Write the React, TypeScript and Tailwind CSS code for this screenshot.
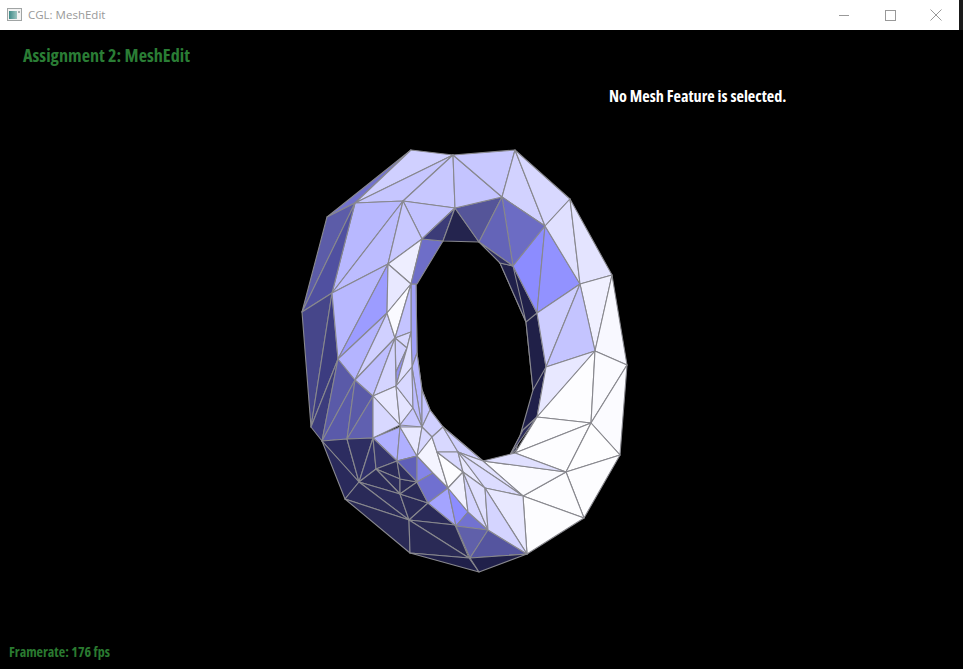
const faces: [string, string][] = [
    // back of the hole
    ["#bcbcff", "411,285 416,284 417,353 422,390 430,410 443,427 483,461 485,488 400,427"],
    ["#a0a0f8", "411,284 416,284 417,353 412,367 411,332"],
    ["#b8b8ff", "412,367 417,353 422,390 422,427"],
    ["#c4c4ff", "422,390 430,410 422,427"],
    ["#d0d0ff", "430,410 443,427 432,437 422,427"],
    ["#20204a", "500,263 513,266 537,313 546,367 537,417 523,430 510,455 516,450 533,390 526,322"],
    ["#202048", "526,322 537,313 546,367 533,390"],
    ["#20204a", "500,263 513,266 526,322"],
    ["#2a2a58", "523,430 537,417 510,455"],

    // top of the ring
    ["#7272cc", "411,150 327,217 355,203"],
    ["#d0d0ff", "411,150 453,155 355,203"],
    ["#c6c6ff", "355,203 453,155 403,201"],
    ["#c8c8ff", "453,155 455,208 403,201"],
    ["#c2c2ff", "403,201 455,208 422,239"],
    ["#b8b8ff", "355,203 403,201 332,293"],
    ["#bcbcff", "403,201 388,264 332,293"],
    ["#c8c8ff", "403,201 422,239 388,264"],
    ["#eeeeff", "388,264 422,239 411,284"],
    ["#6e6ec8", "422,239 443,241 417,284 411,284"],
    ["#3c3c78", "422,239 455,208 443,241"],
    ["#24244e", "455,208 479,242 443,241"],
    ["#555599", "455,208 502,197 479,242"],
    ["#c4c4ff", "453,155 502,197 455,208"],
    ["#c8c8ff", "453,155 515,150 502,197"],
    ["#d2d2ff", "502,197 515,150 545,226"],
    ["#d8d8ff", "515,150 570,199 545,226"],
    ["#6c6cc4", "502,197 545,226 513,266"],
    ["#6464b8", "502,197 513,266 479,242"],
    ["#2e2e60", "479,242 513,266 500,263"],
    ["#8c8cff", "513,266 545,226 537,313"],
    ["#9292ff", "545,226 580,284 537,313"],
    ["#e0e0ff", "570,199 580,284 545,226"],
    ["#e4e4ff", "570,199 612,275 580,284"],

    // right side
    ["#f0f0ff", "612,275 595,351 580,284"],
    ["#f8f8ff", "612,275 627,365 595,351"],
    ["#cdcdff", "537,313 580,284 546,367"],
    ["#c4c4ff", "580,284 595,351 546,367"],
    ["#e8e8ff", "546,367 595,351 537,417"],
    ["#fdfdff", "595,351 591,423 537,417"],
    ["#fbfbff", "595,351 627,365 591,423"],
    ["#fbfbff", "627,365 620,455 591,423"],
    ["#fdfdff", "537,417 591,423 515,453"],
    ["#fdfdff", "515,453 591,423 566,472"],
    ["#fefeff", "591,423 620,455 566,472"],
    ["#fdfdff", "566,472 620,455 584,518"],
    ["#fdfdff", "523,496 566,472 584,518"],
    ["#fdfdff", "523,496 584,518 527,554"],
    ["#fbfbff", "483,461 566,472 523,496"],
    ["#e0e0ff", "483,461 515,453 566,472"],

    // left side
    ["#5c5ca8", "327,217 355,203 302,312"],
    ["#5050a0", "355,203 332,293 302,312"],
    ["#46468a", "302,312 332,293 311,427"],
    ["#3c3c80", "332,293 338,359 311,427"],
    ["#3c3c7c", "311,427 338,359 322,441"],
    ["#5a5aa8", "338,359 355,380 322,441"],
    ["#5a5aaa", "355,380 347,439 322,441"],
    ["#5a5aa8", "355,380 373,396 347,439"],
    ["#6060b0", "373,396 373,438 347,439"],
    ["#b8b8ff", "332,293 388,264 338,359"],
    ["#9c9cff", "388,264 387,313 338,359"],
    ["#b4b4ff", "338,359 387,313 355,380"],
    ["#d0d0ff", "387,313 395,338 355,380"],
    ["#bebeff", "355,380 395,338 373,396"],
    ["#e8e8ff", "388,264 411,284 387,313"],
    ["#fafaff", "387,313 411,284 395,338"],
    ["#c4c4ff", "411,284 411,332 395,338"],
    ["#d8d8ff", "395,338 411,332 407,348"],
    ["#d0d0ff", "395,338 407,348 396,372"],
    ["#9090f0", "407,348 396,386 396,372"],
    ["#d4d4ff", "395,338 396,386 373,396"],
    ["#e0e0ff", "411,332 412,367 396,386 407,348"],
    ["#e8e8ff", "373,396 396,386 400,425"],
    ["#d8d8ff", "373,396 400,425 373,438"],
    ["#e4e4ff", "396,386 413,408 400,425"],
    ["#d8d8ff", "396,386 412,367 413,408"],
    ["#bcbcff", "412,367 422,427 413,408"],
    ["#c8c8ff", "413,408 422,427 400,425"],

    // bottom band, dark
    ["#b0b0ff", "373,438 400,427 397,461"],
    ["#b0b0ff", "400,427 417,456 397,461"],
    ["#2c2c60", "322,441 347,439 359,482"],
    ["#2a2a5c", "322,441 359,482 345,499"],
    ["#2e2e62", "347,439 373,438 359,482"],
    ["#30306a", "373,438 376,469 359,482"],
    ["#35356c", "373,438 397,461 376,469"],
    ["#2a2a58", "397,461 400,479 376,469"],
    ["#2c2c5c", "376,469 400,479 400,494"],
    ["#2a2a58", "359,482 376,469 400,494"],
    ["#2c2c5c", "359,482 400,494 409,520"],
    ["#2a2a58", "345,499 359,482 409,520"],
    ["#2a2a56", "345,499 409,520 410,553"],
    ["#2a2a58", "400,479 417,482 400,494"],
    ["#2e2e60", "397,461 417,456 417,482 400,479"],
    ["#2a2a58", "400,494 428,503 409,520"],
    ["#2a2a58", "400,494 417,482 428,503"],
    ["#2a2a58", "409,520 428,503 455,525"],
    ["#2a2a56", "409,520 455,525 469,558"],
    ["#2a2a56", "409,520 469,558 410,553"],
    ["#20204a", "410,553 469,558 479,572"],
    ["#6060b8", "397,461 417,456 417,482"],
    ["#8484e8", "417,456 433,473 417,482"],
    ["#7070d0", "417,482 433,473 448,488 428,503"],
    ["#a4a4ff", "428,503 448,488 456,526"],
    ["#8c8cff", "448,488 468,512 456,526"],
    ["#7272d0", "468,512 488,530 456,526"],
    ["#6060aa", "456,526 488,530 470,558"],
    ["#55559f", "488,530 527,554 470,558"],
    ["#20204a", "470,558 527,554 479,572"],

    // light fan under the hole
    ["#e8e8ff", "400,427 422,427 417,456"],
    ["#d8d8ff", "422,427 432,437 417,456"],
    ["#f4f4ff", "417,456 432,437 437,452 448,488 433,473"],
    ["#fcfcff", "437,452 463,472 448,488"],
    ["#d8d8ff", "432,437 443,427 458,452 437,452"],
    ["#d0d0ff", "443,427 483,461 458,452"],
    ["#d8d8ff", "437,452 458,452 463,472"],
    ["#e8e8ff", "458,452 485,488 463,472"],
    ["#e2e2ff", "458,452 483,461 523,496"],
    ["#dcdcff", "458,452 523,496 485,488"],
    ["#f0f0ff", "463,472 468,512 448,488"],
    ["#d4d4ff", "463,472 488,530 468,512"],
    ["#e0e0ff", "463,472 485,488 488,530"],
    ["#e8e8ff", "485,488 523,496 527,554"],
    ["#d4d4ff", "485,488 527,554 488,530"],
];

const WindowIcon = () => (
    <svg width="15" height="13" viewBox="0 0 15 13" className="-mt-[2px]">
        <defs>
            <linearGradient id="icon-fill" x1="0" x2="1" y1="0" y2="0">
                <stop offset="0" stopColor="#3e8a88" />
                <stop offset="1" stopColor="#9cc4c0" />
            </linearGradient>
        </defs>
        <rect x="0.5" y="0.5" width="14" height="12" fill="#f2f2f2" stroke="#a0a4a4" />
        <rect x="2" y="3" width="8" height="8" fill="url(#icon-fill)" />
        <rect x="11" y="3" width="2" height="2" fill="#a8b0b0" />
    </svg>
);

export default function App() {
    return (
        <div className="w-[963px] h-[669px] flex flex-col bg-black overflow-hidden">
            <div className="h-[30px] shrink-0 bg-white flex items-center pl-[7px] text-[#999999]">
                <WindowIcon />
                <span className="ml-[6px] text-[11.5px] font-['Open_Sans',sans-serif]">CGL: MeshEdit</span>
                <div className="ml-auto flex items-center">
                    <div className="w-[46px] flex justify-center">
                        <div className="w-[10px] h-px bg-[#999999]" />
                    </div>
                    <div className="w-[46px] flex justify-center">
                        <div className="w-[11px] h-[11px] border border-[#999999]" />
                    </div>
                    <div className="w-[46px] flex justify-center">
                        <svg width="12" height="12" viewBox="0 0 12 12" stroke="#999999" strokeWidth="1">
                            <path d="M0.5 0.5 L11.5 11.5 M11.5 0.5 L0.5 11.5" />
                        </svg>
                    </div>
                    <div className="w-[4px] h-[30px] bg-[#1a1a1a]" />
                </div>
            </div>
            <div className="relative flex-1 font-['Open_Sans',sans-serif] font-bold font-stretch-condensed">
                <svg className="block w-full h-full" viewBox="0 30 963 639">
                    {faces.map(([fill, points], i) => (
                        <polygon
                            key={i}
                            points={points}
                            fill={fill}
                            stroke="#88888e"
                            strokeWidth="1.1"
                            strokeLinejoin="round"
                        />
                    ))}
                </svg>
                <div className="absolute left-[23px] top-[13px] text-[18.2px] leading-6 text-[#2a7d35]">
                    Assignment 2: MeshEdit
                </div>
                <div className="absolute left-[609px] top-[56px] text-[16.2px] leading-5 text-white">
                    No Mesh Feature is selected.
                </div>
                <div className="absolute left-[9px] top-[612px] text-[14px] leading-5 text-[#2a7a30]">
                    Framerate: 176 fps
                </div>
            </div>
        </div>
    );
}
